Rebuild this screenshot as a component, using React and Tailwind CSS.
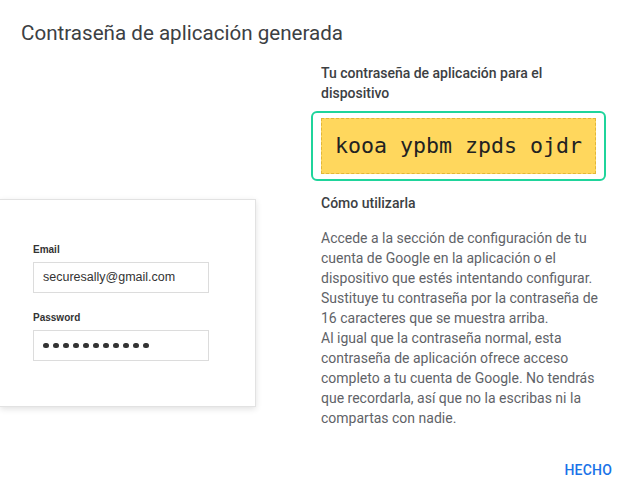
import React from "react";

const Dots = ({ count }) => (
  <div className="flex items-center gap-[4.5px]">
    {Array.from({ length: count }).map((_, i) => (
      <span key={i} className="w-[5.5px] h-[5.5px] rounded-full bg-[#333]" />
    ))}
  </div>
);

const LoginCard = () => (
  <div className="mt-[154px] w-[256px] h-[208px] bg-white border border-l-0 border-[#e2e2e2] shadow-[0_2px_6px_rgba(0,0,0,0.12)] font-['Liberation_Sans',Arial,sans-serif] pl-[33px] pt-[43px]">
    <div className="text-[10px] leading-[14px] font-bold text-[#333]">Email</div>
    <div className="mt-[5px] w-[176px] h-[31px] border border-[#dcdcdc] flex items-center pl-[9px] text-[12.5px] text-[#333]">
      securesally@gmail.com
    </div>
    <div className="mt-[18px] text-[10px] leading-[14px] font-bold text-[#333]">Password</div>
    <div className="mt-[5px] w-[176px] h-[31px] border border-[#dcdcdc] flex items-center pl-[9px]">
      <Dots count={11} />
    </div>
  </div>
);

export default function App() {
  return (
    <div className="w-[639px] h-[501px] bg-white font-['Roboto',sans-serif] overflow-hidden">
      <h1 className="pl-[21px] pt-[21px] text-[20.6px] leading-6 text-[#3c4043]">
        Contraseña de aplicación generada
      </h1>
      <div className="flex">
        <div className="w-[311px]">
          <LoginCard />
        </div>
        <div className="w-[295px]">
          <p className="mt-[18px] pl-[10px] pr-[20px] text-[14px] leading-5 font-medium text-[#3c4043]">
            Tu contraseña de aplicación para el dispositivo
          </p>
          <div className="mt-[8px] h-[70px] border-2 border-[#1fd49b] rounded-[6px] px-[8px] py-[5px]">
            <div className="h-full bg-[#ffd75d] border border-dashed border-[#e3b737] flex items-center justify-center font-['DejaVu_Sans_Mono',monospace] text-[21.6px] text-[#222]">
              kooa ypbm zpds ojdr
            </div>
          </div>
          <h2 className="mt-[12px] pl-[10px] text-[14px] leading-5 font-medium text-[#3c4043]">
            Cómo utilizarla
          </h2>
          <p className="mt-[15px] pl-[10px] text-[14px] leading-5 text-[#5f6368]">
            Accede a la sección de configuración de tu cuenta de Google en la aplicación o el dispositivo que estés intentando configurar. Sustituye tu contraseña por la contraseña de 16 caracteres que se muestra arriba.
            <br />
            Al igual que la contraseña normal, esta contraseña de aplicación ofrece acceso completo a tu cuenta de Google. No tendrás que recordarla, así que no la escribas ni la compartas con nadie.
          </p>
        </div>
      </div>
      <div className="flex justify-end pr-[27px] mt-[32px]">
        <button className="text-[14px] leading-5 font-medium text-[#1a73e8] tracking-[0.2px]">HECHO</button>
      </div>
    </div>
  );
}
